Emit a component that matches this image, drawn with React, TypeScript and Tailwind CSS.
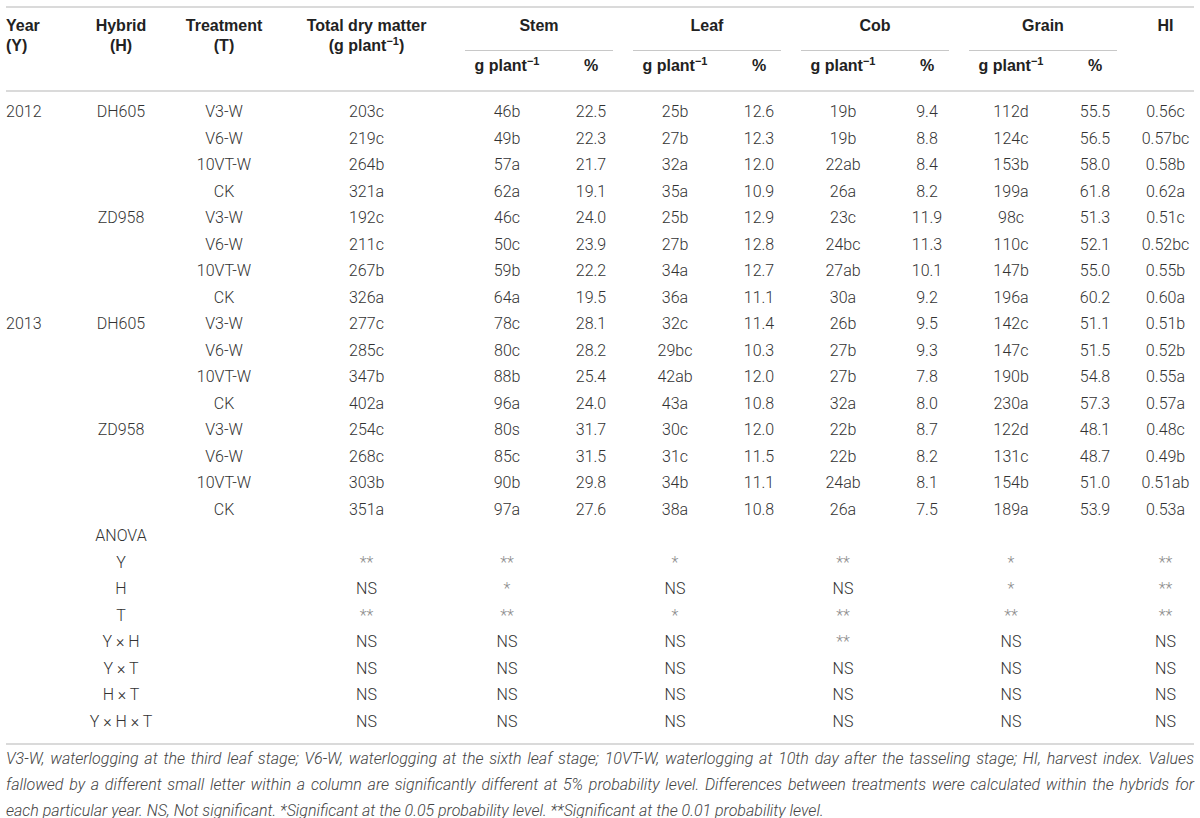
const grid =
  'grid grid-cols-[66px_98px_108px_177px_104px_64px_104px_64px_104px_64px_104px_64px_1fr]'

const data: string[][] = [
  ['2012', 'DH605', 'V3-W', '203c', '46b', '22.5', '25b', '12.6', '19b', '9.4', '112d', '55.5', '0.56c'],
  ['', '', 'V6-W', '219c', '49b', '22.3', '27b', '12.3', '19b', '8.8', '124c', '56.5', '0.57bc'],
  ['', '', '10VT-W', '264b', '57a', '21.7', '32a', '12.0', '22ab', '8.4', '153b', '58.0', '0.58b'],
  ['', '', 'CK', '321a', '62a', '19.1', '35a', '10.9', '26a', '8.2', '199a', '61.8', '0.62a'],
  ['', 'ZD958', 'V3-W', '192c', '46c', '24.0', '25b', '12.9', '23c', '11.9', '98c', '51.3', '0.51c'],
  ['', '', 'V6-W', '211c', '50c', '23.9', '27b', '12.8', '24bc', '11.3', '110c', '52.1', '0.52bc'],
  ['', '', '10VT-W', '267b', '59b', '22.2', '34a', '12.7', '27ab', '10.1', '147b', '55.0', '0.55b'],
  ['', '', 'CK', '326a', '64a', '19.5', '36a', '11.1', '30a', '9.2', '196a', '60.2', '0.60a'],
  ['2013', 'DH605', 'V3-W', '277c', '78c', '28.1', '32c', '11.4', '26b', '9.5', '142c', '51.1', '0.51b'],
  ['', '', 'V6-W', '285c', '80c', '28.2', '29bc', '10.3', '27b', '9.3', '147c', '51.5', '0.52b'],
  ['', '', '10VT-W', '347b', '88b', '25.4', '42ab', '12.0', '27b', '7.8', '190b', '54.8', '0.55a'],
  ['', '', 'CK', '402a', '96a', '24.0', '43a', '10.8', '32a', '8.0', '230a', '57.3', '0.57a'],
  ['', 'ZD958', 'V3-W', '254c', '80s', '31.7', '30c', '12.0', '22b', '8.7', '122d', '48.1', '0.48c'],
  ['', '', 'V6-W', '268c', '85c', '31.5', '31c', '11.5', '22b', '8.2', '131c', '48.7', '0.49b'],
  ['', '', '10VT-W', '303b', '90b', '29.8', '34b', '11.1', '24ab', '8.1', '154b', '51.0', '0.51ab'],
  ['', '', 'CK', '351a', '97a', '27.6', '38a', '10.8', '26a', '7.5', '189a', '53.9', '0.53a'],
  ['', 'ANOVA', '', '', '', '', '', '', '', '', '', '', ''],
  ['', 'Y', '', '**', '**', '', '*', '', '**', '', '*', '', '**'],
  ['', 'H', '', 'NS', '*', '', 'NS', '', 'NS', '', '*', '', '**'],
  ['', 'T', '', '**', '**', '', '*', '', '**', '', '**', '', '**'],
  ['', 'Y × H', '', 'NS', 'NS', '', 'NS', '', '**', '', 'NS', '', 'NS'],
  ['', 'Y × T', '', 'NS', 'NS', '', 'NS', '', 'NS', '', 'NS', '', 'NS'],
  ['', 'H × T', '', 'NS', 'NS', '', 'NS', '', 'NS', '', 'NS', '', 'NS'],
  ['', 'Y × H × T', '', 'NS', 'NS', '', 'NS', '', 'NS', '', 'NS', '', 'NS'],
]

const groups = ['Stem', 'Leaf', 'Cob', 'Grain']

const Unit = () => (
  <>
    g plant<sup className="text-[11px] relative -top-[6px]">−1</sup>
  </>
)

export default function App() {
  return (
    <div className="w-[1200px] bg-white px-[6px] pt-[6px] font-['Roboto',sans-serif] text-[16px] text-[#333]">
      {/* header */}
      <div
        className={`${grid} grid-rows-[43px_39px] border-y-2 border-[#dadada] font-['Liberation_Sans',Arial,sans-serif] font-bold text-[#222] leading-5`}
      >
        <div className="row-span-2 pt-[8px] text-left">
          Year
          <br />
          (Y)
        </div>
        <div className="row-span-2 pt-[8px] text-center">
          Hybrid
          <br />
          (H)
        </div>
        <div className="row-span-2 pt-[8px] text-center">
          Treatment
          <br />
          (T)
        </div>
        <div className="row-span-2 pt-[8px] text-center">
          Total dry matter
          <br />
          (<Unit />)
        </div>
        {groups.map((g) => (
          <div key={g} className="col-span-2 px-[10px]">
            <div className="pt-[8px] pb-[14px] text-center border-b border-[#c8c8c8]">{g}</div>
          </div>
        ))}
        <div className="row-span-2 pt-[8px] pl-[10px] text-center">HI</div>
        {groups.map((g) => (
          <div key={g} className="contents">
            <div className="pt-[5px] text-center">
              <Unit />
            </div>
            <div className="pt-[5px] text-center">%</div>
          </div>
        ))}
      </div>

      {/* body */}
      <div className={`${grid} auto-rows-[26.5px] pt-[7px] pb-[8px] font-light`}>
        {data.map((row, i) =>
          row.map((v, j) => (
            <div
              key={`${i}-${j}`}
              className={`flex items-center whitespace-nowrap ${j === 0 ? 'justify-start' : 'justify-center'} ${
                j === 12 ? 'pl-[10px]' : ''
              }`}
            >
              {/^\*+$/.test(v) ? <span className="text-[#8c8c8c]">{v}</span> : v}
            </div>
          ))
        )}
      </div>

      {/* footnote */}
      <div className="border-t-2 border-[#dadada] pt-[1px] text-[16px] italic font-light text-[#444] leading-[26px]">
        <div className="text-justify [text-align-last:justify]">
          V3-W, waterlogging at the third leaf stage; V6-W, waterlogging at the sixth leaf stage; 10VT-W, waterlogging
          at 10th day after the tasseling stage; HI, harvest index. Values
        </div>
        <div className="text-justify [text-align-last:justify]">
          fallowed by a different small letter within a column are significantly different at 5% probability level.
          Differences between treatments were calculated within the hybrids for
        </div>
        <div className="whitespace-nowrap">
          each particular year. NS, Not significant. *Significant at the 0.05 probability level. **Significant at the
          0.01 probability level.
        </div>
      </div>
    </div>
  )
}
